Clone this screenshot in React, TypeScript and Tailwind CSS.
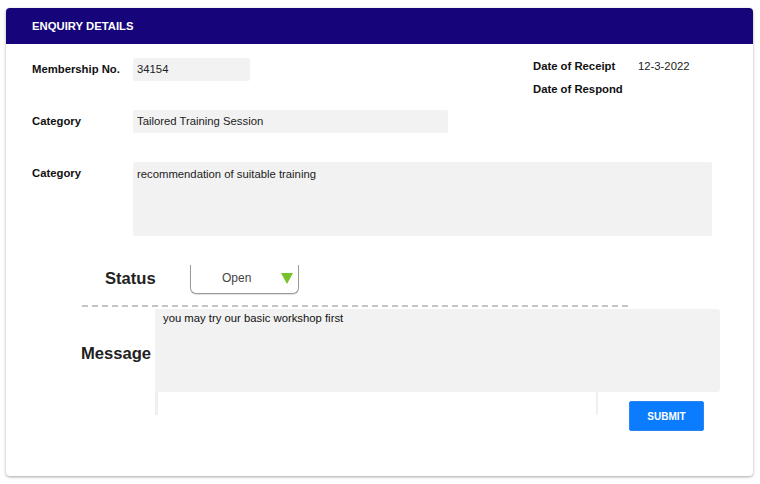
export default function App() {
  return (
    <div className="w-[760px] h-[484px] bg-white font-['Liberation_Sans',Arial,sans-serif] text-[#111] pt-[8px] pl-[6px]">
      <div className="w-[747px] h-[468px] bg-white rounded-[4px] shadow-[0_1px_3px_rgba(0,0,0,0.35)] flex flex-col">
        <div className="h-[36px] bg-[#16047a] rounded-t-[4px] flex items-center pl-[26px]">
          <span className="text-white font-bold text-[11.3px]">ENQUIRY DETAILS</span>
        </div>
        <div className="flex flex-col pl-[26px] pt-[14px]">
          <div className="flex h-[23px] items-start">
            <div className="w-[101px] h-[23px] flex items-center text-[11.3px] font-bold">Membership No.</div>
            <div className="w-[117px] h-[23px] bg-[#f2f2f2] rounded-[2px] flex items-center pl-[4px] text-[11.3px] text-[#222]">34154</div>
            <div className="ml-[283px] flex flex-col text-[11.3px]">
              <div className="flex leading-[16px]">
                <span className="w-[105px] font-bold">Date of Receipt</span>
                <span className="text-[#222]">12-3-2022</span>
              </div>
              <div className="flex leading-[16px] mt-[7px]">
                <span className="w-[105px] font-bold">Date of Respond</span>
              </div>
            </div>
          </div>
          <div className="flex h-[23px] mt-[29px]">
            <div className="w-[101px] h-[23px] flex items-center text-[11.3px] font-bold">Category</div>
            <div className="w-[315px] h-[23px] bg-[#f2f2f2] rounded-[2px] flex items-center pl-[4px] text-[11.3px] text-[#222]">Tailored Training Session</div>
          </div>
          <div className="flex mt-[29px]">
            <div className="w-[101px] pt-[4px] leading-[14px] text-[11.3px] font-bold">Category</div>
            <div className="w-[579px] h-[74px] bg-[#f2f2f2] rounded-[2px] pl-[4px] pt-[5px] leading-[14px] text-[11.3px] text-[#222]">recommendation of suitable training</div>
          </div>
        </div>
        <div className="flex items-center h-[29px] mt-[29px] ml-[99px]">
          <div className="w-[85px] text-[16.6px] font-bold text-[#222]">Status</div>
          <div className="relative w-[109px] h-[29px] border-l border-r border-b border-[#9a9a9a] rounded-b-[6px] shadow-[0_1px_1px_rgba(0,0,0,0.12)]">
            <span className="absolute left-[31px] top-[5px] text-[12px] leading-[16px] text-[#444]">Open</span>
            <svg className="absolute left-[90px] top-[7px]" width="12" height="12" viewBox="0 0 12 12">
              <polygon points="0,1 12,1 6,12" fill="#76c22a" />
            </svg>
          </div>
        </div>
        <div className="mt-[11px] ml-[76px] w-[550px] h-[2px] bg-[repeating-linear-gradient(to_right,#c4c4c4_0px,#c4c4c4_6px,transparent_6px,transparent_10px)]" />
        <div className="flex mt-[2px] ml-[75px]">
          <div className="w-[74px] flex items-center pt-[8px] text-[16.6px] font-bold text-[#222]">Message</div>
          <div className="w-[565px] h-[83px] bg-[#f2f2f2] rounded-r-[3px] pl-[8px] pt-[2px] leading-[14px] text-[11.3px] text-[#111]">you may try our basic workshop first</div>
        </div>
        <div className="flex items-start ml-[149px]">
          <div className="w-[443px] h-[23px] border-l-[3px] border-r-[2px] border-[#efefef]" />
          <button className="ml-[31px] mt-[9px] w-[75px] h-[30px] bg-[#0a7cfd] border border-[#2a86f0] rounded-[2px] text-white font-bold text-[10px] flex items-center justify-center">SUBMIT</button>
        </div>
      </div>
    </div>
  );
}
